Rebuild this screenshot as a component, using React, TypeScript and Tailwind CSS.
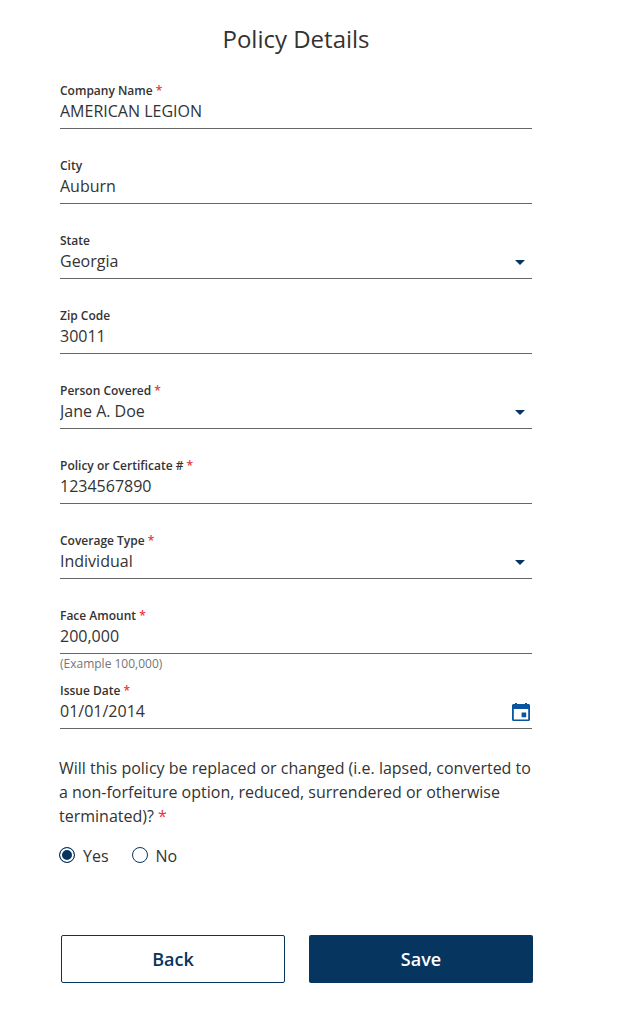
import { useState, type ReactNode } from "react";

const control =
  "block h-6 w-full min-w-0 appearance-none rounded-none bg-transparent p-0 text-base leading-6 text-[#333333] outline-none";

function RequiredMark() {
  return <span className="text-[#e5383b]">*</span>;
}

function Field({
  id,
  label,
  required,
  hint,
  children,
}: {
  id: string;
  label: string;
  required?: boolean;
  hint?: string;
  children: ReactNode;
}) {
  return (
    <div className="min-h-[75px] last:min-h-[73px]">
      <label htmlFor={id} className="block text-xs leading-4 font-semibold">
        {label} {required && <RequiredMark />}
      </label>
      <div className="flex h-[30px] items-start border-b border-[#666666]">{children}</div>
      {hint && <p className="pt-[2px] text-xs leading-4 text-[#757575]">{hint}</p>}
    </div>
  );
}

type ControlProps = { id: string; label: string; required?: boolean };

function TextField({ value, hint, ...field }: ControlProps & { value: string; hint?: string }) {
  return (
    <Field {...field} hint={hint}>
      <input id={field.id} type="text" defaultValue={value} className={control} />
    </Field>
  );
}

function SelectField({ options, ...field }: ControlProps & { options: string[] }) {
  return (
    <Field {...field}>
      <select id={field.id} defaultValue={options[0]} className={control}>
        {options.map((option) => (
          <option key={option}>{option}</option>
        ))}
      </select>
      <svg viewBox="0 0 10 5" className="pointer-events-none mt-[11px] mr-[7px] h-[5px] w-[10px] shrink-0" fill="#06355f" aria-hidden="true">
        <path d="M0 0h10L5 5z" />
      </svg>
    </Field>
  );
}

function Radio({ label, checked, onSelect }: { label: string; checked: boolean; onSelect: () => void }) {
  return (
    <label className="flex items-start gap-2 text-base leading-6">
      <input
        type="radio"
        name="replaced"
        checked={checked}
        onChange={onSelect}
        className="mt-[3px] size-4 appearance-none rounded-full border border-[#06355f] bg-white checked:bg-[#06355f] checked:inset-ring-2 checked:inset-ring-white"
      />
      {label}
    </label>
  );
}

export default function App() {
  const [replaced, setReplaced] = useState(true);
  return (
    <main className="min-h-screen bg-white pr-[87px] pl-[59px] font-['Open_Sans',sans-serif] text-[#333333]">
      <form onSubmit={(event) => event.preventDefault()}>
        <h1 className="pt-[23px] text-center text-2xl leading-8">Policy Details</h1>
        <div className="px-px pt-7">
          <TextField id="company" label="Company Name" value="AMERICAN LEGION" required />
          <TextField id="city" label="City" value="Auburn" />
          <SelectField id="state" label="State" options={["Georgia", "Alabama", "Florida"]} />
          <TextField id="zip" label="Zip Code" value="30011" />
          <SelectField id="person" label="Person Covered" options={["Jane A. Doe"]} required />
          <TextField id="policy" label="Policy or Certificate #" value="1234567890" required />
          <SelectField id="coverage" label="Coverage Type" options={["Individual", "Group"]} required />
          <TextField id="amount" label="Face Amount" value="200,000" hint="(Example 100,000)" required />
          <Field id="date" label="Issue Date" required>
            <input id="date" type="text" defaultValue="01/01/2014" className={control} />
            <button type="button" aria-label="Choose date" className="mt-1 mr-[2px] shrink-0">
              <svg viewBox="0 0 18 18" className="block size-[18px]" fill="#0a55a0" aria-hidden="true">
                <path
                  fillRule="evenodd"
                  d="M3 0h2v1h8V0h2v1h1.500C17.300 1 18 1.700 18 2.500v14c0 .8-.7 1.500-1.500 1.500h-15C.7 18 0 17.300 0 16.500v-14C0 1.700.7 1 1.500 1H3zM1.800 6v10.400h14.400V6zM9.600 9.600h4.600v4.600H9.600z"
                />
              </svg>
            </button>
          </Field>
        </div>
        <fieldset>
          <legend className="text-base leading-6">
            Will this policy be replaced or changed (i.e. lapsed, converted to a non-forfeiture option, reduced, surrendered or otherwise terminated)?{" "}
            <RequiredMark />
          </legend>
          <div className="flex gap-[23px] pt-4">
            <Radio label="Yes" checked={replaced} onSelect={() => setReplaced(true)} />
            <Radio label="No" checked={!replaced} onSelect={() => setReplaced(false)} />
          </div>
        </fieldset>
        <div className="grid grid-cols-2 gap-6 pt-[67px] pl-[2px]">
          <button type="button" className="h-12 rounded-xs border border-[#06355f] bg-white text-lg font-semibold text-[#06355f]">
            Back
          </button>
          <button type="submit" className="h-12 rounded-xs bg-[#06355f] text-lg font-semibold text-white">
            Save
          </button>
        </div>
      </form>
    </main>
  );
}
